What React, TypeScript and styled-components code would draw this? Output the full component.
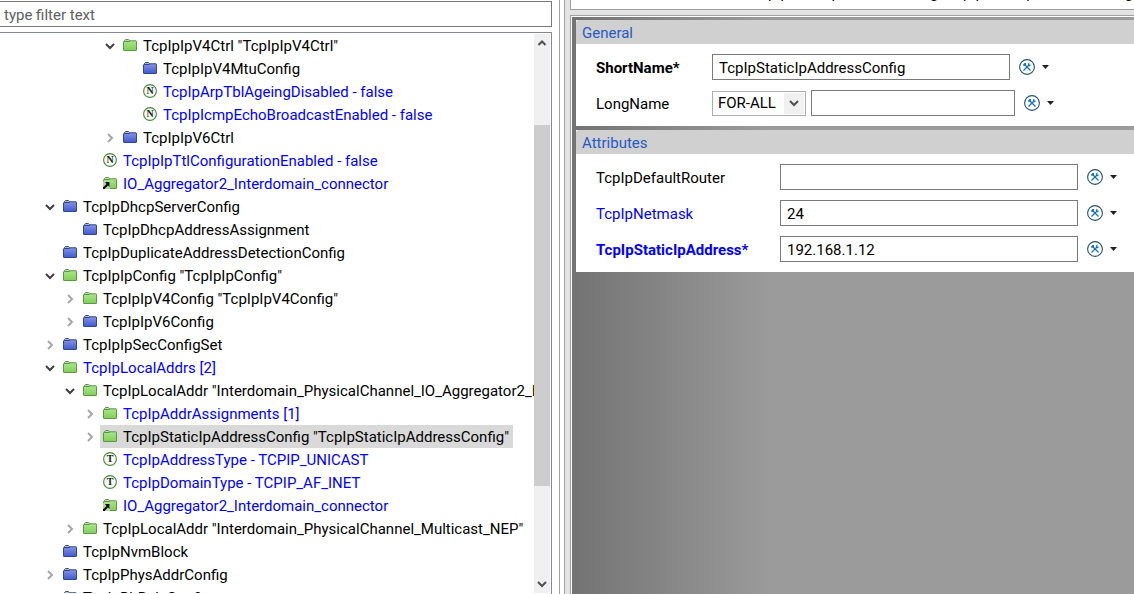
import React from "react";
import styled, { createGlobalStyle } from "styled-components";

const Global = createGlobalStyle`
  *, *::before, *::after { box-sizing: border-box; }
  html, body { margin: 0; }
  body {
    background: #fff;
    color: #000;
    font: 15px/23px Roboto, "Open Sans", sans-serif;
    overflow: hidden;
  }
  button, input, select { font: inherit; color: inherit; margin: 0; }
`;

const Page = styled.div`
  display: grid;
  grid-template-columns: 559px 9px minmax(0, 1fr);
  height: 100vh;
  overflow: hidden;
`;

const Explorer = styled.section`
  display: flex;
  flex-direction: column;
  gap: 5px;
  min-height: 0;
  padding: 1px 7px 0 0;
`;

const Filter = styled.input`
  flex: none;
  width: 100%;
  height: 26px;
  padding: 2px 4px 0;
  border: 1px solid #7a7a7a;
  border-left: 0;
  border-radius: 0;
  outline: 0;
  &::placeholder { color: #606060; opacity: 1; }
`;

const TreeFrame = styled.div`
  flex: 1;
  display: flex;
  min-height: 0;
  padding: 1px 1px 1px 0;
  border-top: 1px solid #828790;
  border-right: 1px solid #828790;
`;

const Tree = styled.ul`
  flex: 1;
  min-width: 0;
  margin: 0;
  padding: 0;
  list-style: none;
  overflow: hidden;
`;

const TreeItem = styled.li<{ $level: number }>`
  display: flex;
  align-items: center;
  height: 23px;
  padding-left: ${(p) => 20 + p.$level * 20}px;
  white-space: nowrap;
`;

const Toggle = styled.button`
  display: flex;
  flex: none;
  align-items: center;
  width: 20px;
  height: 23px;
  padding: 1px 0 0 5px;
  border: 0;
  background: none;
`;

const ToggleSpace = styled.span`
  flex: none;
  width: 20px;
`;

const Node = styled.span<{ $blue?: boolean; $selected?: boolean }>`
  display: flex;
  align-items: center;
  gap: 5px;
  height: 23px;
  padding: 0 4px 0 2px;
  color: ${(p) => (p.$blue ? "#00f" : "#000")};
  background: ${(p) => (p.$selected ? "#d9d9d9" : "none")};
  svg { flex: none; }
`;

const NodeText = styled.span`
  padding-top: 2px;
`;

const ScrollBar = styled.div`
  display: flex;
  flex-direction: column;
  width: 16px;
  background: #f0f0f0;
`;

const ScrollButton = styled.button`
  display: flex;
  align-items: center;
  justify-content: center;
  height: 18px;
  padding: 0;
  border: 0;
  background: none;
`;

const ScrollTrack = styled.div`
  display: grid;
  grid-template-rows: 14fr 69fr 17fr;
  flex: 1;
`;

const ScrollThumb = styled.div`
  grid-row: 2;
  background: #cdcdcd;
`;

const Sash = styled.div`
  border-left: 1px solid #a0a0a0;
  border-right: 3px solid #e3e3e3;
  box-shadow: inset -1px 0 #a0a0a0;
`;

const Editor = styled.main`
  display: flex;
  flex-direction: column;
  gap: 5px;
  min-width: 0;
  padding-left: 2px;
  background: #e3e3e3;
`;

const TitleBar = styled.header`
  flex: none;
  height: 10px;
  border: solid #a0a0a0;
  border-width: 0 0 1px 1px;
  background: #fff;
  overflow: hidden;
`;

const TitleText = styled.div`
  margin-top: -18px;
  padding-left: 181px;
  white-space: nowrap;
`;

const Form = styled.form`
  flex: 1;
  display: flex;
  flex-direction: column;
  gap: 4px;
  padding: 4px 0 0 5px;
  border: solid #a0a0a0;
  border-width: 1px 0 0 1px;
  box-shadow: inset 1px 1px #fff;
  background: linear-gradient(to right, #737373, #9b9b9b 200px);
`;

const Section = styled.section`
  background: #fff;
`;

const SectionTitle = styled.h2`
  margin: 0;
  height: 24px;
  padding-left: 6px;
  border-radius: 3px 0 0 0;
  background: #d0d0d0;
  color: #2759c4;
  font: inherit;
  line-height: 26px;
`;

const Fields = styled.div<{ $labelWidth: number }>`
  display: grid;
  grid-template-columns: ${(p) => p.$labelWidth}px 1fr;
  row-gap: 10px;
  padding: 10px 0 10px 20px;
`;

const Label = styled.label<{ $tone?: "blue"; $bold?: boolean }>`
  align-self: center;
  padding-top: 2px;
  color: ${(p) => (p.$tone ? "#00f" : "#000")};
  font-weight: ${(p) => (p.$bold ? 700 : 400)};
`;

const Controls = styled.div`
  display: flex;
  align-items: center;
  height: 26px;
`;

const TextBox = styled.input<{ $width: number }>`
  width: ${(p) => p.$width}px;
  height: 26px;
  padding: 2px 6px 0;
  border: 1px solid #7a7a7a;
  border-radius: 0;
  outline: 0;
`;

const SelectWrap = styled.div`
  position: relative;
  width: 94px;
  height: 25px;
  margin-right: 5px;
`;

const Select = styled.select`
  appearance: none;
  display: block;
  width: 100%;
  height: 100%;
  padding: 0 22px 0 5px;
  border: 1px solid #adadad;
  border-radius: 0;
  background: linear-gradient(#f0f0f0, #f0f0f0) right 1px center / 20px 21px no-repeat #fff;
`;

const SelectArrow = styled.span`
  position: absolute;
  top: 7px;
  right: 7px;
  display: flex;
  pointer-events: none;
`;

const Action = styled.button`
  display: flex;
  align-items: center;
  gap: 7px;
  margin-left: 9px;
  padding: 0;
  border: 0;
  background: none;
`;

type IconName = "green" | "blue" | "N" | "T" | "link";

const Folder = ({ color, linked }: { color: "green" | "blue"; linked?: boolean }) => {
  const id = `folder-${React.useId()}`;
  const green = color === "green";
  return (
    <svg width="16" height="15" viewBox="0 0 16 15" aria-hidden="true">
      <defs>
        <linearGradient id={id} x1="0" y1="0" x2="0" y2="1">
          <stop offset="0" stopColor={green ? "#a8e689" : "#8792e4"} />
          <stop offset="1" stopColor={green ? "#82ce59" : "#3f5bcf"} />
        </linearGradient>
      </defs>
      <path d="M2.500 4V2.500L3.500 1.500h3L7.500 2.500V4" fill={green ? "#bdd9b0" : "#aeb7d0"} stroke={green ? "#60924b" : "#3e4d72"} />
      <path
        d="M1.500 4Q1.500 3.500 2 3.500H7L8 2.800h6Q14.500 2.800 14.500 3.500V12Q14.500 12.500 14 12.500H2Q1.500 12.500 1.500 12z"
        fill={`url(#${id})`}
        stroke={green ? "#5c9646" : "#2f4791"}
      />
      {linked && (
        <>
          <path d="M1 5h7v8H1z" fill="#b5d6a7" />
          <path d="M3 6H7.500v5L6 9.500 3 12.500V13H1v-2l1-.5L4.500 8z" fill="#111" />
        </>
      )}
    </svg>
  );
};

const Letter = ({ char }: { char: string }) => (
  <svg width="16" height="15" viewBox="0 0 16 15" aria-hidden="true">
    <circle cx="8" cy="7" r="6.400" fill="#f6fbf3" stroke="#46873c" strokeWidth="1.100" />
    <text x="8" y="10" textAnchor="middle" fontFamily="Liberation Serif, serif" fontWeight="700" fontSize="10" fill="#222">
      {char}
    </text>
  </svg>
);

const NodeIcon = ({ name }: { name: IconName }) => {
  if (name === "N" || name === "T") return <Letter char={name} />;
  if (name === "link") return <Folder color="green" linked />;
  return <Folder color={name} />;
};

const Chevron = ({ dir, color = "#444" }: { dir: "up" | "down" | "right"; color?: string }) => {
  const d = { up: "M1.500 7L5 3.500 8.500 7", down: "M1 3L5 7 9 3", right: "M3 1L7 5 3 9" }[dir];
  return (
    <svg width="10" height="10" viewBox="0 0 10 10" aria-hidden="true">
      <path d={d} fill="none" stroke={color} strokeWidth="2" />
    </svg>
  );
};

const ToolsMenu = ({ label }: { label: string }) => (
  <Action type="button" aria-label={label}>
    <svg width="16" height="16" viewBox="0 0 16 16" aria-hidden="true">
      <circle cx="8" cy="8" r="7.400" fill="#fff" stroke="#24506f" strokeWidth="1.100" />
      <path d="M6 6l5.500 5.500" stroke="#1673c4" strokeWidth="1.300" />
      <path d="M4 6.500V5.500L5.500 4H7v1.500L5.500 7z" fill="#1673c4" />
      <path d="M4.500 11.500L10 6" stroke="#1673c4" strokeWidth="1.300" />
      <path d="M9 4.500l1.500-1-.3 2 1.800.3-1 1.500H9.500L9 6.500z" fill="#1673c4" />
    </svg>
    <svg width="7" height="4" viewBox="0 0 7 4" aria-hidden="true">
      <path d="M0 0h7L3.500 4z" fill="#222" />
    </svg>
  </Action>
);

interface TreeRow {
  level: number;
  icon: IconName;
  text: string;
  open?: boolean;
  blue?: boolean;
  selected?: boolean;
}

const rows: TreeRow[] = [
  { level: 4, icon: "green", text: 'TcpIpIpV4Ctrl "TcpIpIpV4Ctrl"', open: true },
  { level: 5, icon: "blue", text: "TcpIpIpV4MtuConfig" },
  { level: 5, icon: "N", text: "TcpIpArpTblAgeingDisabled - false", blue: true },
  { level: 5, icon: "N", text: "TcpIpIcmpEchoBroadcastEnabled - false", blue: true },
  { level: 4, icon: "blue", text: "TcpIpIpV6Ctrl", open: false },
  { level: 3, icon: "N", text: "TcpIpIpTtlConfigurationEnabled - false", blue: true },
  { level: 3, icon: "link", text: "IO_Aggregator2_Interdomain_connector", blue: true },
  { level: 1, icon: "blue", text: "TcpIpDhcpServerConfig", open: true },
  { level: 2, icon: "blue", text: "TcpIpDhcpAddressAssignment" },
  { level: 1, icon: "blue", text: "TcpIpDuplicateAddressDetectionConfig" },
  { level: 1, icon: "green", text: 'TcpIpIpConfig "TcpIpIpConfig"', open: true },
  { level: 2, icon: "green", text: 'TcpIpIpV4Config "TcpIpIpV4Config"', open: false },
  { level: 2, icon: "blue", text: "TcpIpIpV6Config", open: false },
  { level: 1, icon: "blue", text: "TcpIpIpSecConfigSet", open: false },
  { level: 1, icon: "green", text: "TcpIpLocalAddrs [2]", open: true, blue: true },
  { level: 2, icon: "green", text: 'TcpIpLocalAddr "Interdomain_PhysicalChannel_IO_Aggregator2_Interdomain"', open: true },
  { level: 3, icon: "green", text: "TcpIpAddrAssignments [1]", open: false, blue: true },
  { level: 3, icon: "green", text: 'TcpIpStaticIpAddressConfig "TcpIpStaticIpAddressConfig"', open: false, selected: true },
  { level: 3, icon: "T", text: "TcpIpAddressType - TCPIP_UNICAST", blue: true },
  { level: 3, icon: "T", text: "TcpIpDomainType - TCPIP_AF_INET", blue: true },
  { level: 3, icon: "link", text: "IO_Aggregator2_Interdomain_connector", blue: true },
  { level: 2, icon: "green", text: 'TcpIpLocalAddr "Interdomain_PhysicalChannel_Multicast_NEP"', open: false },
  { level: 1, icon: "blue", text: "TcpIpNvmBlock" },
  { level: 1, icon: "blue", text: "TcpIpPhysAddrConfig", open: false },
  { level: 1, icon: "blue", text: "TcpIpRbRuleConfig" },
];

const attributes = [
  { id: "router", label: "TcpIpDefaultRouter", value: "" },
  { id: "netmask", label: "TcpIpNetmask", value: "24", blue: true },
  { id: "address", label: "TcpIpStaticIpAddress*", value: "192.168.1.12", blue: true, bold: true },
];

export default function App() {
  return (
    <Page>
      <Global />
      <Explorer>
        <Filter aria-label="Filter" placeholder="type filter text" />
        <TreeFrame>
          <Tree>
            {rows.map((row, i) => (
              <TreeItem key={i} $level={row.level}>
                {row.open === undefined ? (
                  <ToggleSpace />
                ) : (
                  <Toggle type="button" aria-expanded={row.open} aria-label={`Toggle ${row.text}`}>
                    <Chevron dir={row.open ? "down" : "right"} color={row.open ? "#404040" : "#a6a6a6"} />
                  </Toggle>
                )}
                <Node $blue={row.blue} $selected={row.selected}>
                  <NodeIcon name={row.icon} />
                  <NodeText>{row.text}</NodeText>
                </Node>
              </TreeItem>
            ))}
          </Tree>
          <ScrollBar>
            <ScrollButton type="button" aria-label="Scroll up"><Chevron dir="up" color="#505050" /></ScrollButton>
            <ScrollTrack><ScrollThumb /></ScrollTrack>
            <ScrollButton type="button" aria-label="Scroll down"><Chevron dir="down" color="#505050" /></ScrollButton>
          </ScrollBar>
        </TreeFrame>
      </Explorer>
      <Sash />
      <Editor>
        <TitleBar>
          <TitleText>TcpIpStaticIpAddressConfig "TcpIpStaticIpAddressConfig"</TitleText>
        </TitleBar>
        <Form onSubmit={(e) => e.preventDefault()}>
          <Section>
            <SectionTitle>General</SectionTitle>
            <Fields $labelWidth={116}>
              <Label htmlFor="short" $bold>ShortName*</Label>
              <Controls>
                <TextBox id="short" $width={298} defaultValue="TcpIpStaticIpAddressConfig" />
                <ToolsMenu label="ShortName actions" />
              </Controls>
              <Label htmlFor="long">LongName</Label>
              <Controls>
                <SelectWrap>
                  <Select aria-label="Language"><option>FOR-ALL</option></Select>
                  <SelectArrow><Chevron dir="down" color="#505050" /></SelectArrow>
                </SelectWrap>
                <TextBox id="long" $width={204} />
                <ToolsMenu label="LongName actions" />
              </Controls>
            </Fields>
          </Section>
          <Section>
            <SectionTitle>Attributes</SectionTitle>
            <Fields $labelWidth={184}>
              {attributes.map((a) => (
                <React.Fragment key={a.id}>
                  <Label htmlFor={a.id} $tone={a.blue ? "blue" : undefined} $bold={a.bold}>{a.label}</Label>
                  <Controls>
                    <TextBox id={a.id} $width={298} defaultValue={a.value} />
                    <ToolsMenu label={`${a.label} actions`} />
                  </Controls>
                </React.Fragment>
              ))}
            </Fields>
          </Section>
        </Form>
      </Editor>
    </Page>
  );
}
